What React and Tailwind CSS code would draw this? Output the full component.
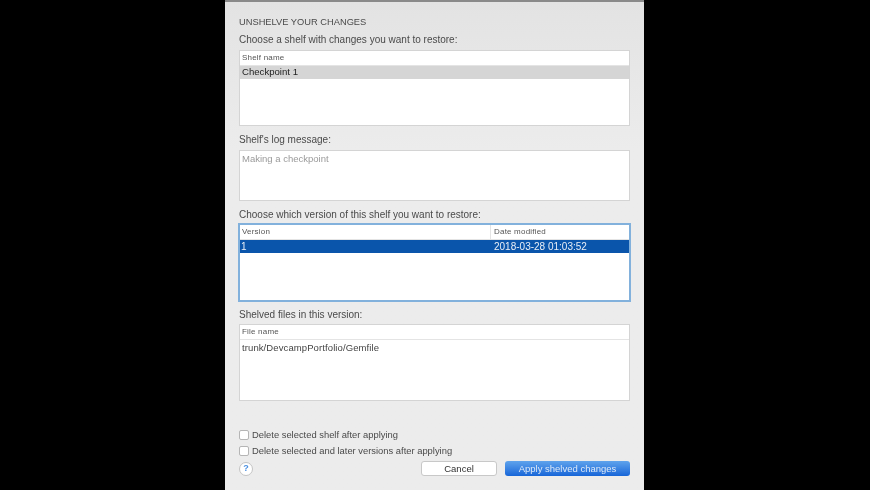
const font = { fontFamily: '"Liberation Sans", Arial, sans-serif' };

function Box({ className = "", children }) {
  return (
    <div className={`mx-[14px] flex flex-col overflow-hidden border border-[#d4d4d4] bg-white ${className}`}>
      {children}
    </div>
  );
}

function Head({ children }) {
  return (
    <div className="flex h-[15px] shrink-0 items-center border-b border-[#e4e4e4] bg-white pl-[2px] text-[8px] tracking-[0.2px] text-[#555]">
      {children}
    </div>
  );
}

function Label({ className = "", children }) {
  return (
    <div className={`mx-[14px] flex items-center text-[10px] leading-none text-[#4a4a4a] ${className}`}>
      {children}
    </div>
  );
}

function Check({ label, className = "" }) {
  return (
    <div className={`mx-[14px] flex items-center gap-[3px] ${className}`}>
      <span className="h-[10px] w-[10px] rounded-[2px] border border-[#b5b5b5] bg-white" />
      <span className="text-[9.4px] leading-none text-[#4a4a4a]">{label}</span>
    </div>
  );
}

export default function App() {
  return (
    <div className="flex h-[490px] w-[870px] overflow-hidden bg-black pl-[225px]" style={font}>
      <div className="flex h-full w-[419px] flex-col border-t-[2px] border-t-[#8a8a8a] bg-gradient-to-b from-[#e3e3e3] to-[#ececec] to-[30%] blur-[0.35px]">
        <Label className="mt-[15px] h-[11px] !text-[9.3px]">UNSHELVE YOUR CHANGES</Label>
        <Label className="mt-[6px] h-[11px]">Choose a shelf with changes you want to restore:</Label>
        <Box className="mt-[5px] h-[76px]">
          <Head>Shelf name</Head>
          <div className="flex h-[13px] items-center bg-[#d5d5d5] pl-[2px] text-[9.6px] text-[#222]">Checkpoint 1</div>
        </Box>
        <Label className="mt-[8px] h-[12px]">Shelf&apos;s log message:</Label>
        <Box className="mt-[4px] h-[51px]">
          <div className="pl-[2px] pt-[2px] text-[9.5px] leading-[12px] text-[#9a9a9a]">Making a checkpoint</div>
        </Box>
        <Label className="mt-[8px] h-[12px]">Choose which version of this shelf you want to restore:</Label>
        <div className="mx-[13px] mt-[2px] flex h-[79px] flex-col overflow-hidden border-2 border-[#82b1dc] bg-white">
          <div className="flex h-[15px] shrink-0 items-center border-b border-[#e4e4e4] text-[8px] tracking-[0.2px] text-[#555]">
            <div className="w-[251px] self-stretch border-r border-[#e4e4e4] pl-[2px] leading-[14px]">Version</div>
            <div className="pl-[3px]">Date modified</div>
          </div>
          <div className="flex h-[13px] shrink-0 items-center bg-[#0a55ab] text-[10px] text-[#e8eef6]">
            <div className="w-[251px] pl-[1px]">1</div>
            <div className="pl-[3px]">2018-03-28 01:03:52</div>
          </div>
        </div>
        <Label className="mt-[7px] h-[12px]">Shelved files in this version:</Label>
        <Box className="mt-[3px] h-[77px]">
          <Head>File name</Head>
          <div className="pl-[2px] pt-[2px] text-[9.5px] leading-[12px] tracking-[0.1px] text-[#444]">trunk/DevcampPortfolio/Gemfile</div>
        </Box>
        <Check className="mt-[29px]" label="Delete selected shelf after applying" />
        <Check className="mt-[6px]" label="Delete selected and later versions after applying" />
        <div className="mx-[14px] mt-[5px] flex items-center">
          <span className="flex h-[14px] w-[14px] items-center justify-center rounded-full border border-[#c4c4c4] bg-white text-[9px] font-bold leading-none text-[#4a8fe0]">?</span>
          <button className="ml-auto h-[15px] w-[76px] rounded-[3px] border border-[#c8c8c8] bg-white text-[9.5px] leading-none text-[#333]">Cancel</button>
          <button className="ml-[8px] h-[15px] w-[125px] rounded-[3px] bg-gradient-to-b from-[#5fa3ec] to-[#1565d8] text-[9.5px] leading-none text-[#dce9f8]">Apply shelved changes</button>
        </div>
      </div>
    </div>
  );
}
